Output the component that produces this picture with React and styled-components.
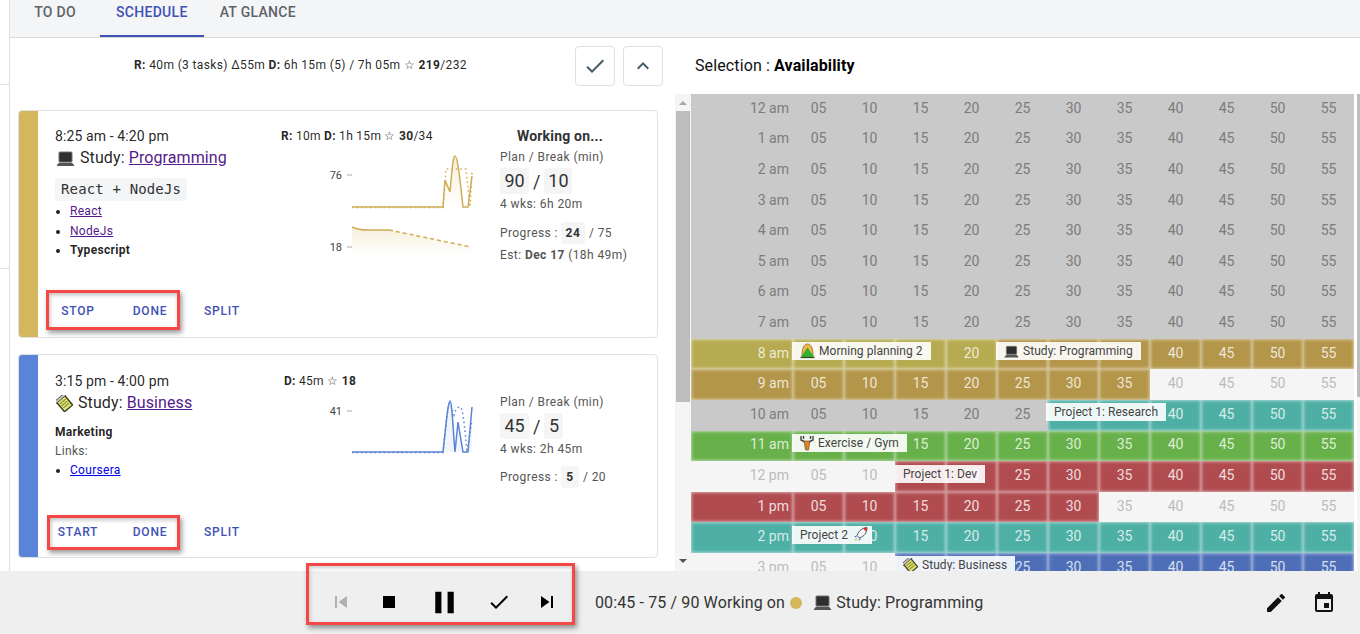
import styled, { createGlobalStyle } from "styled-components";

const GlobalStyle = createGlobalStyle`
  html, body {
    margin: 0;
    padding: 0;
    background: #fff;
    font-family: Roboto, "Liberation Sans", sans-serif;
    color: rgba(0, 0, 0, 0.87);
  }
  * { box-sizing: border-box; }
`;

const Page = styled.div`
  width: 1360px;
  height: 634px;
  overflow: hidden;
  display: flex;
  flex-direction: column;
`;

const Main = styled.div`
  height: 571px;
  display: flex;
  overflow: hidden;
`;

const Strip = styled.div`
  width: 10px;
  flex: none;
  border-right: 1px solid #e0e0e0;
`;

const StripCell = styled.div`
  height: ${props => props.h}px;
  border-bottom: 1px solid #e0e0e0;
`;

const Content = styled.div`
  flex: 1;
  display: flex;
  flex-direction: column;
  min-width: 0;
`;

const TabBar = styled.div`
  height: 38px;
  flex: none;
  display: flex;
  background: #f4f5f7;
  border-bottom: 1px solid #dcdcdc;
`;

const Tab = styled.div`
  min-width: 90px;
  height: 37px;
  padding: 0 16px 12px;
  display: flex;
  align-items: center;
  justify-content: center;
  font-size: 14px;
  font-weight: 500;
  letter-spacing: 0.3px;
  color: ${props => props.active ? "#3f51b5" : "#5f6368"};
  border-bottom: 2px solid ${props => props.active ? "#3f51b5" : "transparent"};
`;

const Columns = styled.div`
  flex: 1;
  display: flex;
  min-height: 0;
`;

const LeftPane = styled.div`
  width: 656px;
  flex: none;
  overflow: hidden;
`;

const SummaryRow = styled.div`
  height: 72px;
  display: flex;
  align-items: flex-start;
  padding: 8px 3px 0 124px;
`;

const Summary = styled.div`
  flex: 1;
  font-size: 12px;
  line-height: 38px;
  letter-spacing: 0.37px;
  height: 38px;
`;

const SquareButton = styled.div`
  width: 40px;
  height: 40px;
  margin-left: 8px;
  border: 1px solid #e0e0e0;
  border-radius: 4px;
  display: flex;
  align-items: center;
  justify-content: center;
  color: #455a64;
`;

const CardList = styled.div`
  display: flex;
  flex-direction: column;
  gap: 16px;
  padding-left: 8px;
`;

const Card = styled.div`
  width: 640px;
  height: ${props => props.h}px;
  flex: none;
  display: flex;
  border: 1px solid #e0e0e0;
  border-radius: 4px;
  overflow: hidden;
`;

const ColorBar = styled.div`
  width: 19px;
  flex: none;
  background: ${props => props.color};
`;

const CardBody = styled.div`
  flex: 1;
  display: flex;
  flex-direction: column;
  min-width: 0;
`;

const CardColumns = styled.div`
  flex: 1;
  display: grid;
  grid-template-columns: 226px 219px 1fr;
  padding: ${props => props.top}px 0 0 17px;
`;

const TimeText = styled.div`
  font-size: 14px;
  line-height: 18px;
  letter-spacing: 0.12px;
`;

const Title = styled.div`
  font-size: 16px;
  line-height: 24px;
  margin-top: 1px;
  padding-left: 1px;
  display: flex;
  align-items: center;
  gap: 5px;
  white-space: pre;
  letter-spacing: 0.1px;
`;

const TitleLink = styled.a`
  color: ${props => props.visited ? "#551a8b" : "#0000ee"};
  text-decoration: underline;
`;

const CodeChip = styled.div`
  display: inline-block;
  margin-top: 8px;
  padding: 0 6px;
  height: 23px;
  line-height: 23px;
  font-family: "DejaVu Sans Mono", "Liberation Mono", monospace;
  font-size: 14px;
  letter-spacing: 0.15px;
  color: #333;
  background: #f4f5f7;
  border-radius: 3px;
`;

const BulletList = styled.ul`
  margin: ${props => props.top || 0}px 0 0;
  padding: 0 0 0 15px;
  font-size: 12px;
  line-height: 19.5px;
  letter-spacing: 0.3px;
`;

const NoteLine = styled.div`
  font-size: 12px;
  line-height: 19px;
  letter-spacing: 0.3px;
  margin-top: ${props => props.top || 0}px;
  font-weight: ${props => props.bold ? 700 : 400};
  color: ${props => props.bold ? "rgba(0,0,0,.87)" : "#555"};
`;

const SmallLink = styled.a`
  color: ${props => props.visited ? "#551a8b" : "#0000ee"};
  text-decoration: underline;
`;

const StatsColumn = styled.div`
  padding-left: ${props => props.offset || 0}px;
  position: relative;
`;

const StatsText = styled.div`
  font-size: 12px;
  line-height: 18px;
  letter-spacing: 0.29px;
  white-space: nowrap;
`;

const ChartBox = styled.svg`
  display: block;
  margin: ${props => props.top}px 0 0 ${props => props.left}px;
`;

const InfoColumn = styled.div`
  display: flex;
  flex-direction: column;
  color: #555;
`;

const WorkingTitle = styled.div`
  width: 120px;
  text-align: center;
  font-size: 14px;
  font-weight: 700;
  line-height: 18px;
  letter-spacing: 0.2px;
  color: #333;
`;

const InfoLine = styled.div`
  font-size: 12px;
  line-height: 18px;
  letter-spacing: 0.42px;
  margin-top: ${props => props.top || 0}px;
  white-space: nowrap;
  display: flex;
  align-items: center;
`;

const BigRow = styled.div`
  display: flex;
  align-items: center;
  gap: 4px;
  margin-top: 2px;
  font-size: 18px;
  color: #333;
`;

const BigChip = styled.span`
  min-width: ${props => props.w}px;
  height: 26px;
  line-height: 26px;
  text-align: center;
  background: #f5f5f5;
  border-radius: 3px;
`;

const TinyChip = styled.span`
  min-width: ${props => props.w}px;
  height: 22px;
  line-height: 22px;
  margin: 0 4px 0 3px;
  text-align: center;
  font-weight: 700;
  color: #333;
  background: #f5f5f5;
  border-radius: 3px;
`;

const Actions = styled.div`
  position: relative;
  height: 36px;
  margin-bottom: ${props => props.bottom}px;
  padding-left: 4px;
  display: flex;
  align-items: center;
`;

const ActionButton = styled.div`
  width: 72px;
  text-align: center;
  font-size: 12px;
  font-weight: 500;
  letter-spacing: 0.8px;
  color: #3f51b5;
`;

const Callout = styled.div`
  position: absolute;
  left: ${props => props.left}px;
  top: ${props => props.top}px;
  width: ${props => props.w}px;
  height: ${props => props.h}px;
  border: 3px solid #f44848;
  box-shadow: 2px 3px 5px rgba(0, 0, 0, 0.4), inset 1px 2px 4px rgba(0, 0, 0, 0.25);
  pointer-events: none;
`;

const RightPane = styled.div`
  flex: 1;
  min-width: 0;
  display: flex;
  flex-direction: column;
`;

const SelectionHeader = styled.div`
  height: 56px;
  flex: none;
  padding: 18px 0 0 29px;
  font-size: 16px;
  line-height: 20px;
  letter-spacing: 0.12px;
  color: #111;

  b { font-weight: 700; color: #000; }
`;

const ScheduleWrap = styled.div`
  flex: 1;
  min-height: 0;
  display: flex;
  padding-left: 9px;
`;

const LeftScroll = styled.div`
  width: 16px;
  flex: none;
  background: #f5f5f5;
  position: relative;
  display: flex;
  flex-direction: column;
  align-items: center;
  justify-content: space-between;
  padding: 7px 0 8px;
`;

const ScrollThumb = styled.div`
  position: absolute;
  left: 1px;
  right: 1px;
  top: 17px;
  height: 291px;
  background: #bdbdbd;
`;

const ScrollArrow = styled.div`
  width: 0;
  height: 0;
  border-left: 4px solid transparent;
  border-right: 4px solid transparent;
  ${props => props.up ? "border-bottom: 4px solid #a8a8a8;" : "border-top: 4px solid #555;"}
`;

const RightScroll = styled.div`
  width: 3px;
  flex: none;
  margin-left: 3px;
  background: #f5f5f5;
`;

const RightThumb = styled.div`
  height: 303px;
  background: #bdbdbd;
`;

const HourGrid = styled.div`
  width: 663px;
  flex: none;
  display: grid;
  grid-template-columns: 102px repeat(11, 51px);
  grid-auto-rows: 30.6px;
  align-content: start;
  overflow: hidden;
`;

const slotStyles = {
  busy: ["#c9c9c9", "#7c7c7c"],
  free: ["#f5f5f5", "#bcbcbc"],
  olive: ["#b6ab50", "rgba(255,255,255,.78)"],
  brown: ["#b3964a", "rgba(255,255,255,.78)"],
  teal: ["#4eb0a5", "rgba(255,255,255,.78)"],
  green: ["#68b14a", "rgba(255,255,255,.78)"],
  red: ["#b04b4f", "rgba(255,255,255,.82)"],
  blue: ["#4e6fb8", "rgba(255,255,255,.78)"],
};

const Slot = styled.div`
  position: relative;
  display: flex;
  align-items: center;
  justify-content: ${props => props.hour ? "flex-end" : "center"};
  padding: 0 ${props => props.hour ? "4px" : "0"} 3px 0;
  font-size: 14px;
  background: ${props => slotStyles[props.kind][0]};
  color: ${props => slotStyles[props.kind][1]};
  ${props => (props.kind !== "busy" && props.kind !== "free") ? `
    box-shadow: inset 0 0 3px 1px rgba(255, 255, 255, 0.5);
  ` : ""}
`;

const SlotChip = styled.div`
  position: absolute;
  z-index: 2;
  top: 3.5px;
  left: ${props => props.left || 0}px;
  height: 18px;
  padding: 0 ${props => props.pad || 8}px 0 8px;
  display: flex;
  align-items: center;
  gap: 4px;
  white-space: nowrap;
  font-size: 12px;
  letter-spacing: 0.05px;
  color: #444;
  background: rgba(255, 255, 255, 0.9);
`;

const PlayerBar = styled.div`
  height: 63px;
  flex: none;
  position: relative;
  z-index: 3;
  display: flex;
  align-items: center;
  padding-left: 306px;
  background: #efefef;
`;

const Controls = styled.div`
  width: 269px;
  height: 62px;
  margin-top: -17px;
  padding: 16px 0 0 8px;
  display: flex;
  align-items: center;
  border: 3px solid #f44848;
  box-shadow: 2px 3px 5px rgba(0, 0, 0, 0.4), inset 1px 2px 4px rgba(0, 0, 0, 0.2);
`;

const ControlButton = styled.div`
  width: ${props => props.w}px;
  flex: none;
  display: flex;
  justify-content: center;
  color: ${props => props.disabled ? "#b0b0b0" : "#000"};
`;

const NowPlaying = styled.div`
  margin-left: 20px;
  display: flex;
  align-items: center;
  font-size: 16px;
  letter-spacing: 0.12px;
  color: #333;
  white-space: pre;
`;

const Dot = styled.span`
  width: 12px;
  height: 12px;
  margin: 0 11px 0 5px;
  border-radius: 50%;
  background: #d4b65c;
`;

const BarIcons = styled.div`
  margin-left: auto;
  margin-right: 24px;
  display: flex;
  gap: 24px;
  color: #111;
`;

const Icon = ({ d, size = 24 }) => (
  <svg width={size} height={size} viewBox="0 0 24 24" fill="currentColor"><path d={d} /></svg>
);

const icons = {
  check: "M9 16.17L4.83 12l-1.42 1.41L9 19 21 7l-1.41-1.41z",
  less: "M12 8l-6 6 1.41 1.41L12 10.83l4.59 4.58L18 14z",
  prev: "M6 6h2v12H6zm3.5 6l8.5 6V6z",
  next: "M6 18l8.5-6L6 6v12zM16 6v12h2V6h-2z",
  stop: "M6 6h12v12H6z",
  pause: "M6 19h4V5H6v14zm8-14v14h4V5h-4z",
  edit: "M3 17.25V21h3.75L17.81 9.94l-3.75-3.75L3 17.25zM20.71 7.04c.39-.39.39-1.02 0-1.41l-2.34-2.34a.9959.9959 0 0 0-1.41 0l-1.83 1.83 3.75 3.75 1.83-1.83z",
  event: "M17 12h-5v5h5v-5zM16 1v2H8V1H6v2H5c-1.11 0-1.99.9-1.99 2L3 19c0 1.1.89 2 2 2h14c1.1 0 2-.9 2-2V5c0-1.1-.9-2-2-2h-1V1h-2zm3 18H5V8h14v11z",
};

const Laptop = ({ size = 16 }) => (
  <svg width={size} height={size} viewBox="0 0 16 16">
    <rect x="2.500" y="2.500" width="11" height="8.500" rx="0.8" fill="#2f2f2f" stroke="#777" strokeWidth="0.8" />
    <path d="M2.500 11.500h11l1.800 2.200a.4.4 0 0 1-.3.6H1a.4.4 0 0 1-.3-.6z" fill="#555" />
  </svg>
);

const Memo = ({ size = 16 }) => (
  <svg width={size} height={size} viewBox="0 0 16 16">
    <g transform="rotate(-40 8 8)">
      <rect x="3" y="2" width="10" height="12" fill="#dfe06a" stroke="#3a3a2a" strokeWidth="1.300" />
      <path d="M4.500 5.500h7M4.500 8h7M4.500 10.500h7" stroke="#7d8a3a" strokeWidth="1" />
      <rect x="2" y="0.500" width="12" height="2.500" fill="#c8c8c0" stroke="#444" strokeWidth="0.8" />
    </g>
  </svg>
);

const Mountain = () => (
  <svg width="15" height="16" viewBox="0 0 15 16">
    <path d="M2 13C2 5 4 1 7.500 1S13 5 13 13z" fill="#f0b848" stroke="#8a6a20" strokeWidth="0.8" />
    <path d="M7.500 4.500L14 14H1z" fill="#2fb02f" />
    <path d="M.5 14.500h14" stroke="#3a4a20" strokeWidth="1.200" />
  </svg>
);

const Antlers = () => (
  <svg width="14" height="16" viewBox="0 0 14 16">
    <path d="M1 1v4l4 2M13 1v4l-4 2M3.500 1v3M10.500 1v3" fill="none" stroke="#444" strokeWidth="1.400" />
    <path d="M4 6h6l-1.500 9h-3z" fill="#d9822b" stroke="#7a4510" strokeWidth="0.6" />
  </svg>
);

const Rocket = () => (
  <svg width="16" height="17" viewBox="0 0 16 16">
    <path d="M15 1c-5 .4-8 3-10 8l2.500 2.500c5-2 7.500-5 7.500-10.500z" fill="#f4f4f4" stroke="#445" strokeWidth="0.9" />
    <path d="M15 1c-1.500.1-3 .5-4 1l3 3c.5-1 1-2.500 1-4z" fill="#d9302f" />
    <path d="M5 9l-3 1 2 1zM7.500 11.500l-1 3 2.500-2z" fill="#3b78c9" />
    <path d="M4.500 11.500L2 14.500l3-1.500z" fill="#e8902a" />
  </svg>
);

const minutes = ["05", "10", "15", "20", "25", "30", "35", "40", "45", "50", "55"];

const scheduleRows = [
  { label: "12 am", spans: [["busy", 12]] },
  { label: "1 am", spans: [["busy", 12]] },
  { label: "2 am", spans: [["busy", 12]] },
  { label: "3 am", spans: [["busy", 12]] },
  { label: "4 am", spans: [["busy", 12]] },
  { label: "5 am", spans: [["busy", 12]] },
  { label: "6 am", spans: [["busy", 12]] },
  { label: "7 am", spans: [["busy", 12]] },
  { label: "8 am", spans: [["olive", 5], ["brown", 7]] },
  { label: "9 am", spans: [["brown", 8], ["free", 4]] },
  { label: "10 am", spans: [["busy", 6], ["teal", 6]] },
  { label: "11 am", spans: [["green", 12]] },
  { label: "12 pm", spans: [["free", 3], ["red", 9]] },
  { label: "1 pm", spans: [["red", 7], ["free", 5]] },
  { label: "2 pm", spans: [["teal", 12]] },
  { label: "3 pm", spans: [["free", 3], ["blue", 9]] },
];

// chips that sit over the grid, keyed by "row-slot"
const slotChips = {
  "8-1": <SlotChip left={-1}><Mountain />Morning planning 2</SlotChip>,
  "8-5": <SlotChip left={-1}><Laptop size={15} />Study: Programming</SlotChip>,
  "10-6": <SlotChip left={-2}>Project 1: Research</SlotChip>,
  "11-1": <SlotChip left={-1}><Antlers />Exercise / Gym</SlotChip>,
  "12-3": <SlotChip>Project 1: Dev</SlotChip>,
  "14-1": <SlotChip left={-1} pad={4}>Project 2 <Rocket /></SlotChip>,
  "15-3": <SlotChip><Memo size={15} />Study: Business</SlotChip>,
};

const expandSpans = spans => spans.flatMap(([kind, count]) => Array(count).fill(kind));

const ScheduleGrid = () => (
  <HourGrid>
    {scheduleRows.map((row, r) => {
      const kinds = expandSpans(row.spans);
      return kinds.map((kind, s) => (
        <Slot key={`${r}-${s}`} kind={kind} hour={s === 0}>
          {s === 0 ? row.label : minutes[s - 1]}
          {slotChips[`${r}-${s}`]}
        </Slot>
      ));
    })}
  </HourGrid>
);

const ProgrammingChart = () => (
  <ChartBox top={5} left={39} width="160" height="110" viewBox="320 150 160 110">
    <defs>
      <linearGradient id="goldFade" x1="0" y1="0" x2="0" y2="1">
        <stop offset="0" stopColor="#d4b65c" stopOpacity="0.22" />
        <stop offset="1" stopColor="#d4b65c" stopOpacity="0" />
      </linearGradient>
    </defs>
    <text x="342" y="179" textAnchor="end" fontSize="11" fill="#444">76</text>
    <path d="M347 175h5" stroke="#aaa" />
    <text x="342" y="251" textAnchor="end" fontSize="11" fill="#444">18</text>
    <path d="M347 247h5" stroke="#aaa" />
    <path d="M443 207L445 180L450 192C452 170 453 156 455 156C458 156 461 190 463 207L468 207L472 176V207Z" fill="url(#goldFade)" />
    <path d="M352 207H443L445 180L450 192C452 170 453 156 455 156C458 156 461 190 463 207H468L472 176" fill="none" stroke="#d0ad55" strokeWidth="1.500" />
    <path d="M352 207.500H443L446 169H466L470 207L472 172" fill="none" stroke="#d0ad55" strokeWidth="1.500" strokeDasharray="1.500 3" />
    <path d="M352 227C358 230 362 230 368 230H389L471 247V256H352Z" fill="url(#goldFade)" />
    <path d="M352 227C358 230 362 230 368 230H389" fill="none" stroke="#d0ad55" strokeWidth="1.500" />
    <path d="M389 230L471 247" fill="none" stroke="#d0ad55" strokeWidth="1.500" strokeDasharray="4 3" />
  </ChartBox>
);

const BusinessChart = () => (
  <ChartBox top={5} left={36} width="160" height="70" viewBox="320 395 160 70">
    <text x="342" y="415" textAnchor="end" fontSize="11" fill="#444">41</text>
    <path d="M347 411h5" stroke="#aaa" />
    <path d="M443 452C446 425 448 401 450 401C452 401 453 430 455 452L458 422L463 452H468L472 407V452Z" fill="#5b84d8" fillOpacity="0.08" />
    <path d="M352 452H443C446 425 448 401 450 401C452 401 453 430 455 452L458 422L463 452H468L472 407" fill="none" stroke="#5b84d8" strokeWidth="1.500" />
    <path d="M352 452.500H443C446 425 448 403 450 403L454 415C456 408 458 407 460 407C463 407 465 430 467 452L472 420" fill="none" stroke="#5b84d8" strokeWidth="1.500" strokeDasharray="1.500 3" />
  </ChartBox>
);

const App = () => (
  <Page>
    <GlobalStyle />
    <Main>
      <Strip>
        <StripCell h={85} />
        <StripCell h={184} />
      </Strip>
      <Content>
        <TabBar>
          <Tab>TO DO</Tab>
          <Tab active>SCHEDULE</Tab>
          <Tab>AT GLANCE</Tab>
        </TabBar>
        <Columns>
          <LeftPane>
            <SummaryRow>
              <Summary><b>R:</b> 40m (3 tasks) Δ55m <b>D:</b> 6h 15m (5) / 7h 05m ☆ <b>219</b>/232</Summary>
              <SquareButton><Icon d={icons.check} /></SquareButton>
              <SquareButton><Icon d={icons.less} /></SquareButton>
            </SummaryRow>
            <CardList>
              <Card h={228}>
                <ColorBar color="#d4b65c" />
                <CardBody>
                  <CardColumns top={16}>
                    <div>
                      <TimeText>8:25 am - 4:20 pm</TimeText>
                      <Title><Laptop size={19} /><span>Study: <TitleLink visited href="#">Programming</TitleLink></span></Title>
                      <CodeChip>React + NodeJs</CodeChip>
                      <BulletList top={1}>
                        <li><SmallLink visited href="#">React</SmallLink></li>
                        <li><SmallLink visited href="#">NodeJs</SmallLink></li>
                        <li><b>Typescript</b></li>
                      </BulletList>
                    </div>
                    <StatsColumn>
                      <StatsText><b>R:</b> 10m <b>D:</b> 1h 15m ☆ <b>30</b>/34</StatsText>
                      <ProgrammingChart />
                    </StatsColumn>
                    <InfoColumn>
                      <WorkingTitle>Working on...</WorkingTitle>
                      <InfoLine top={3}>Plan / Break (min)</InfoLine>
                      <BigRow><BigChip w={29}>90</BigChip>/<BigChip w={28}>10</BigChip></BigRow>
                      <InfoLine top={1}>4 wks: 6h 20m</InfoLine>
                      <InfoLine top={9}>Progress :<TinyChip w={24}>24</TinyChip>/ 75</InfoLine>
                      <InfoLine top={2}>Est:&nbsp;<b>Dec 17</b>&nbsp;(18h 49m)</InfoLine>
                    </InfoColumn>
                  </CardColumns>
                  <Actions bottom={8}>
                    <ActionButton>STOP</ActionButton>
                    <ActionButton>DONE</ActionButton>
                    <ActionButton>SPLIT</ActionButton>
                    <Callout left={8} top={-3} w={134} h={40} />
                  </Actions>
                </CardBody>
              </Card>
              <Card h={204}>
                <ColorBar color="#5b84d8" />
                <CardBody>
                  <CardColumns top={17}>
                    <div>
                      <TimeText>3:15 pm - 4:00 pm</TimeText>
                      <Title><Memo size={17} /><span>Study: <TitleLink visited href="#">Business</TitleLink></span></Title>
                      <NoteLine bold top={8}>Marketing</NoteLine>
                      <NoteLine>Links:</NoteLine>
                      <BulletList>
                        <li><SmallLink href="#">Coursera</SmallLink></li>
                      </BulletList>
                    </div>
                    <StatsColumn offset={3}>
                      <StatsText><b>D:</b> 45m ☆ <b>18</b></StatsText>
                      <BusinessChart />
                    </StatsColumn>
                    <InfoColumn>
                      <InfoLine top={21}>Plan / Break (min)</InfoLine>
                      <BigRow><BigChip w={29}>45</BigChip>/<BigChip w={19}>5</BigChip></BigRow>
                      <InfoLine top={1}>4 wks: 2h 45m</InfoLine>
                      <InfoLine top={8}>Progress :<TinyChip w={18}>5</TinyChip>/ 20</InfoLine>
                    </InfoColumn>
                  </CardColumns>
                  <Actions bottom={7}>
                    <ActionButton>START</ActionButton>
                    <ActionButton>DONE</ActionButton>
                    <ActionButton>SPLIT</ActionButton>
                    <Callout left={9} top={1} w={133} h={35} />
                  </Actions>
                </CardBody>
              </Card>
            </CardList>
          </LeftPane>
          <RightPane>
            <SelectionHeader>Selection : <b>Availability</b></SelectionHeader>
            <ScheduleWrap>
              <LeftScroll>
                <ScrollThumb />
                <ScrollArrow up />
                <ScrollArrow />
              </LeftScroll>
              <ScheduleGrid />
              <RightScroll><RightThumb /></RightScroll>
            </ScheduleWrap>
          </RightPane>
        </Columns>
      </Content>
    </Main>
    <PlayerBar>
      <Controls>
        <ControlButton w={48} disabled><Icon d={icons.prev} /></ControlButton>
        <ControlButton w={48}><Icon d={icons.stop} /></ControlButton>
        <ControlButton w={63}><Icon d={icons.pause} size={37} /></ControlButton>
        <ControlButton w={46}><Icon d={icons.check} /></ControlButton>
        <ControlButton w={50}><Icon d={icons.next} /></ControlButton>
      </Controls>
      <NowPlaying>
        00:45 - 75 / 90 Working on<Dot /><Laptop size={19} /> Study: Programming
      </NowPlaying>
      <BarIcons>
        <Icon d={icons.edit} />
        <Icon d={icons.event} />
      </BarIcons>
    </PlayerBar>
  </Page>
);

export default App;
